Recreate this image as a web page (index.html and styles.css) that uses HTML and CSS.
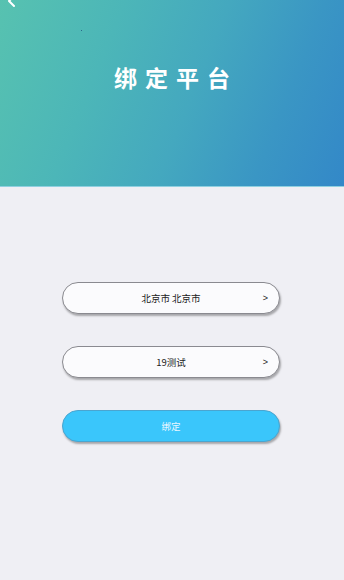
FILE: index.html
```html
<!DOCTYPE html>
<html lang="zh">
<head>
<meta charset="utf-8">
<link rel="stylesheet" href="styles.css">
</head>
<body>
<div class="page">
  <header class="hero">
    <svg class="back" width="10" height="14" viewBox="0 0 10 14"><path d="M7 1 L2 6 L7 11" fill="none" stroke="#fff" stroke-width="2" stroke-linecap="round" stroke-linejoin="round"/></svg>
    <span class="dot"></span>
    <h1 class="title">绑定平台</h1>
  </header>
  <main class="form">
    <div class="field"><span class="label">北京市 北京市</span><span class="arrow">&gt;</span></div>
    <div class="field"><span class="label">19测试</span><span class="arrow">&gt;</span></div>
    <div class="submit">绑定</div>
  </main>
</div>
</body>
</html>
```
FILE: styles.css
```css
* { box-sizing: border-box; }
html, body { margin: 0; padding: 0; }
body {
  width: 344px; height: 580px; overflow: hidden;
  background: #efeff4;
  font-family: "Noto Sans CJK SC", "Noto Sans", sans-serif;
}
.page { display: flex; flex-direction: column; height: 580px; }
.hero {
  position: relative;
  height: 187px;
  background: linear-gradient(112deg, #57c2b0 0%, #4cb6b8 30%, #44a8bf 55%, #3a96c4 78%, #3388c8 100%);
  border-bottom: 1px solid #8fd0e0;
  display: flex; justify-content: center;
  padding-top: 58px;
}
.back { position: absolute; left: 7px; top: -5px; }
.dot { position: absolute; left: 81px; top: 30px; width: 1px; height: 1px; background: #2a6a8a; }
.title {
  margin: 0; color: #fff; font-size: 23px; font-weight: 700;
  letter-spacing: 8px; line-height: 38px; padding-left: 8px;
}
.form {
  display: flex; flex-direction: column; align-items: center;
  padding-top: 95px; padding-right: 2px; gap: 32px;
}
.field, .submit {
  width: 218px; height: 32px; border-radius: 16px;
  display: flex; align-items: center; justify-content: center;
  position: relative; font-size: 9.5px;
}
.field {
  background: #fbfbfd;
  border: 1px solid #8a8a90;
  box-shadow: 1px 2px 2px rgba(0,0,0,0.3);
  color: #222;
}
.arrow {
  position: absolute; right: 11px; top: 50%; transform: translateY(-50%);
  font-size: 9px; line-height: 10px; color: #222; font-family: "Liberation Sans", sans-serif;
}
.submit {
  background: #3ac6fb;
  border: 1px solid #4aa5d0;
  box-shadow: 1px 2px 2px rgba(0,0,0,0.3);
  color: #e8f6ff;
}
```
